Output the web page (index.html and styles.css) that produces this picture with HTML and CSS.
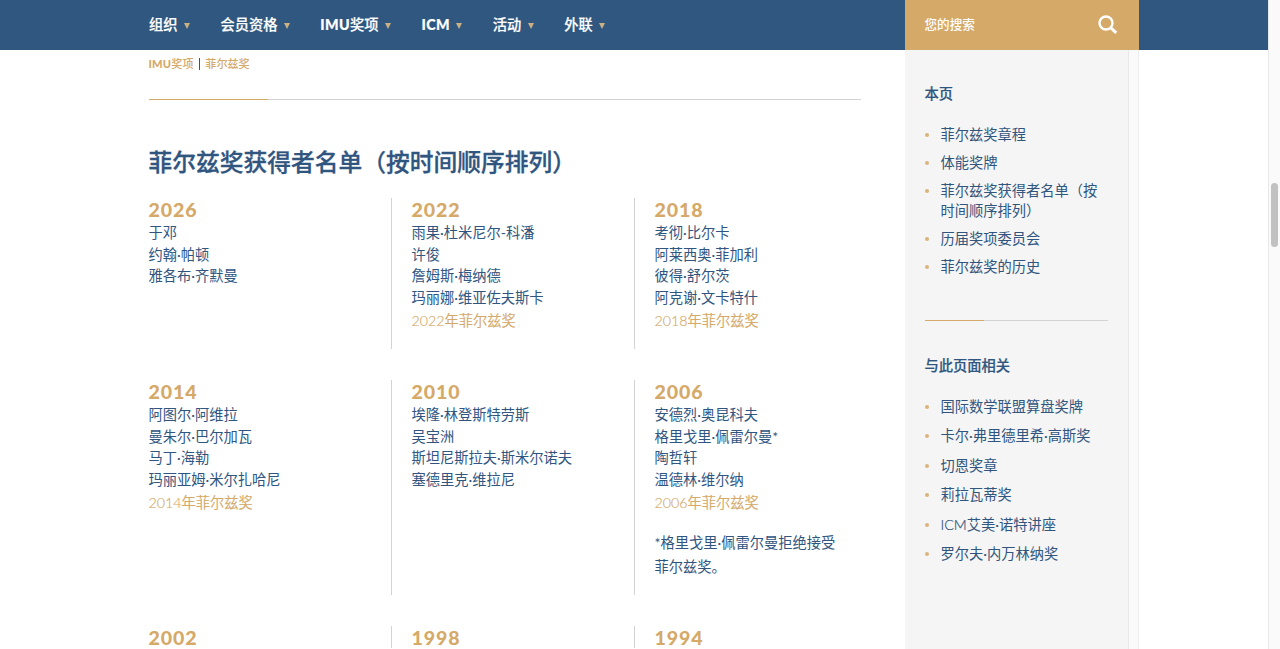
FILE: index.html
```html
<!DOCTYPE html>
<html lang="zh-CN">
<head>
  <meta charset="UTF-8" />
  <meta name="viewport" content="width=device-width, initial-scale=1.0"/>
  <title>菲尔兹奖</title>
  <link rel="stylesheet" href="styles.css">
</head>
<body>

  <!-- Header -->
  <header>
    <nav>
      <a href="#">组织</a>
      <a href="#">会员资格</a>
      <a href="#"><b>IMU</b>奖项</a>
      <a href="#"><b>ICM</b></a>
      <a href="#">活动</a>
      <a href="#">外联</a>
    </nav>
    <div class="search">
      <span>您的搜索</span>
      <svg width="20" height="20" viewBox="0 0 20 20" fill="none" stroke="#fff">
        <circle cx="8" cy="8" r="6.5" stroke-width="2.4"/>
        <path d="M12.6 12.6L18.2 17.8" stroke-width="3"/>
      </svg>
    </div>
  </header>

  <div class="page">
    <main>
      <div class="breadcrumb"><a href="#"><b>IMU</b>奖项</a><i></i><a href="#">菲尔兹奖</a></div>
      <div class="rule"></div>
      <h2>菲尔兹奖获得者名单（按时间顺序排列）</h2>

      <!-- Winners -->
      <div class="winners">
        <div class="row">
          <div class="year">
            <h3>2026</h3>
            <p>于邓<br>约翰·帕顿<br>雅各布·齐默曼</p>
          </div>
          <div class="year">
            <h3>2022</h3>
            <p>雨果·杜米尼尔-科潘<br>许俊<br>詹姆斯·梅纳德<br>玛丽娜·维亚佐夫斯卡</p>
            <a href="#">2022年菲尔兹奖</a>
          </div>
          <div class="year">
            <h3>2018</h3>
            <p>考彻·比尔卡<br>阿莱西奥·菲加利<br>彼得·舒尔茨<br>阿克谢·文卡特什</p>
            <a href="#">2018年菲尔兹奖</a>
          </div>
        </div>
        <div class="row">
          <div class="year">
            <h3>2014</h3>
            <p>阿图尔·阿维拉<br>曼朱尔·巴尔加瓦<br>马丁·海勒<br>玛丽亚姆·米尔扎哈尼</p>
            <a href="#">2014年菲尔兹奖</a>
          </div>
          <div class="year">
            <h3>2010</h3>
            <p>埃隆·林登斯特劳斯<br>吴宝洲<br>斯坦尼斯拉夫·斯米尔诺夫<br>塞德里克·维拉尼</p>
          </div>
          <div class="year">
            <h3>2006</h3>
            <p>安德烈·奥昆科夫<br>格里戈里·佩雷尔曼*<br>陶哲轩<br>温德林·维尔纳</p>
            <a href="#">2006年菲尔兹奖</a>
            <p class="note">*格里戈里·佩雷尔曼拒绝接受菲尔兹奖。</p>
          </div>
        </div>
        <div class="row last">
          <div class="year"><h3>2002</h3></div>
          <div class="year"><h3>1998</h3></div>
          <div class="year"><h3>1994</h3></div>
        </div>
      </div>
    </main>

    <!-- Sidebar -->
    <aside>
      <div class="side-content">
        <h4>本页</h4>
        <ul>
          <li>菲尔兹奖章程</li>
          <li>体能奖牌</li>
          <li>菲尔兹奖获得者名单（按时间顺序排列）</li>
          <li>历届奖项委员会</li>
          <li>菲尔兹奖的历史</li>
        </ul>
        <div class="rule side-rule"></div>
        <h4>与此页面相关</h4>
        <ul class="related">
          <li>国际数学联盟算盘奖牌</li>
          <li>卡尔·弗里德里希·高斯奖</li>
          <li>切恩奖章</li>
          <li>莉拉瓦蒂奖</li>
          <li><span>ICM</span>艾美·诺特讲座</li>
          <li>罗尔夫·内万林纳奖</li>
        </ul>
      </div>
      <div class="side-track"></div>
    </aside>
  </div>

  <!-- Page scrollbar -->
  <div class="scrollbar"><div class="thumb"></div></div>

</body>
</html>
```

FILE: styles.css
```css
* {
  box-sizing: border-box;
  margin: 0;
  padding: 0;
}

body {
  height: 649px;
  overflow: hidden;
  background: #fff;
  color: #30557f;
  font-family: Lato, "Noto Sans CJK SC", sans-serif;
  font-size: 14.25px;
  line-height: 21.4px;
}

a {
  color: #d5a968;
  text-decoration: none;
}

b {
  font-weight: 900;
}

header {
  display: flex;
  width: 1268px;
  height: 50px;
  background: #30577f;
}

nav {
  display: flex;
  gap: 30.4px;
  width: 905px;
  height: 49px;
  padding-left: 149px;
}

nav a {
  display: flex;
  align-items: center;
  color: #fff;
  font-weight: 500;
  -webkit-text-stroke: 0.2px #fff;
}

nav b {
  letter-spacing: 0.4px;
}

nav a::after {
  content: "";
  margin: 2px 0 0 6.5px;
  border: 3px solid transparent;
  border-top: 6px solid #cbb083;
  border-bottom: 0;
}

.search {
  display: flex;
  justify-content: space-between;
  align-items: center;
  width: 234px;
  padding: 0 21.5px 1px 19.5px;
  background: #d5a968;
  color: #fff;
  font-size: 12.6px;
  font-weight: 500;
}

.page {
  display: flex;
  height: 599px;
}

main {
  width: 905px;
  padding: 4px 44px 0 148.5px;
}

.breadcrumb {
  display: flex;
  align-items: center;
  height: 20px;
  font-size: 11.1px;
  font-weight: 500;
}

.breadcrumb b {
  letter-spacing: 0.2px;
}

.breadcrumb i {
  width: 1px;
  height: 12px;
  margin: 0 5.4px;
  background: #30557f;
}

.rule {
  height: 1px;
  margin-top: 25px;
  background: #d3d3d3;
}

.rule::before {
  content: "";
  display: block;
  width: 119px;
  height: 1px;
  background: #d5a968;
}

h2 {
  margin-top: 44px;
  font-size: 23.75px;
  font-weight: 500;
  line-height: 36px;
  white-space: nowrap;
  -webkit-text-stroke: 0.3px #30557f;
}

.winners {
  display: flex;
  flex-direction: column;
  gap: 31px;
  margin-top: 18px;
}

.row {
  display: flex;
}

.year {
  width: 243px;
  min-height: 151px;
  padding-left: 20px;
  border-right: 1px solid #d3d3d3;
}

.year:first-child {
  padding-left: 0;
}

.year:last-child {
  width: 220px;
  padding-right: 18px;
  border-right: 0;
}

.last .year {
  min-height: 22px;
}

.year h3 {
  height: 24.3px;
  color: #d5a968;
  font-size: 19.6px;
  font-weight: 900;
  line-height: 23.6px;
  letter-spacing: 0.9px;
}

.last .year h3 {
  height: 22px;
}

.year a {
  display: block;
  padding-top: 1.9px;
  font-weight: 350;
  -webkit-text-stroke: 0.15px #d5a968;
}

.year .note {
  margin-top: 18px;
  padding-bottom: 16px;
  line-height: 24px;
}

aside {
  display: flex;
  width: 234px;
  background: #f5f5f5;
}

.side-content {
  width: 223px;
  padding: 34px 20px 0 19.5px;
}

.side-track {
  width: 12px;
  background: #fafafa;
  border-left: 1px solid #e8e8e8;
  border-right: 1px solid #ededed;
}

aside h4 {
  font-weight: 500;
  line-height: 20px;
  -webkit-text-stroke: 0.2px #30557f;
}

aside ul {
  margin-top: 21px;
  list-style: none;
}

aside li {
  position: relative;
  margin-bottom: 8px;
  padding-left: 16px;
  width: 177px;
  line-height: 20px;
}

aside li span {
  font-weight: 300;
  -webkit-text-stroke: 0.2px #30557f;
}

aside li::before {
  content: "";
  position: absolute;
  left: 0.5px;
  top: 8px;
  width: 4px;
  height: 4px;
  border-radius: 50%;
  background: #dcb47d;
}

.related li {
  margin-bottom: 9.4px;
}

.side-rule {
  width: 183px;
  margin: 43px 0 35px;
}

.side-rule::before {
  width: 59px;
}

.scrollbar {
  position: fixed;
  top: 0;
  right: 0;
  width: 12px;
  height: 100%;
  padding: 183px 2px 0;
  background: #fafafa;
  border-left: 1px solid #e8e8e8;
}

.thumb {
  width: 7px;
  height: 64px;
  border-radius: 4px;
  background: #c1c1c1;
}
```
